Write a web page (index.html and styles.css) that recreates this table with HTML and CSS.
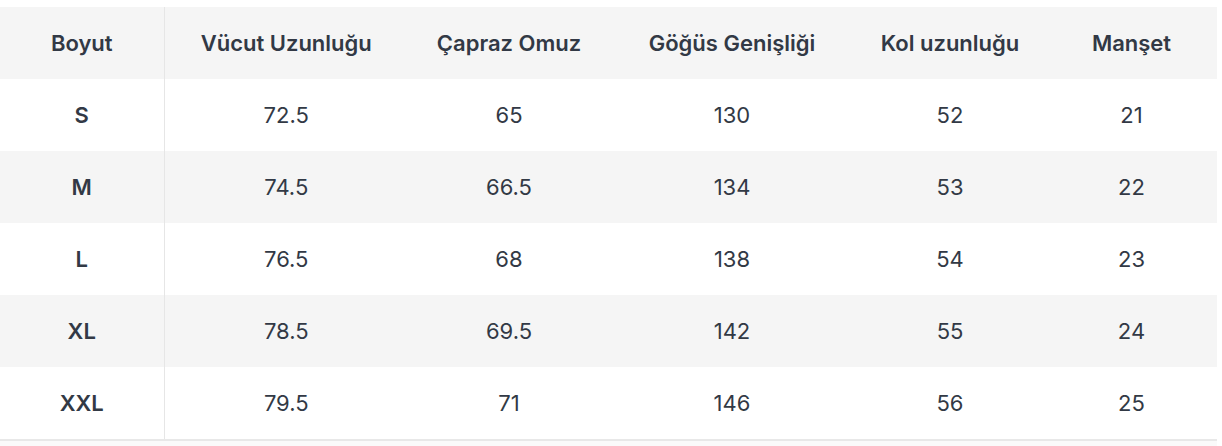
FILE: index.html
```html
<!DOCTYPE html>
<html lang="tr">
<head>
<meta charset="utf-8">
<link rel="stylesheet" href="styles.css">
</head>
<body>
<div class="wrap">
<table class="size-table">
  <colgroup>
    <col class="c1"><col class="c2"><col class="c3"><col class="c4"><col class="c5"><col class="c6">
  </colgroup>
  <thead>
    <tr><th>Boyut</th><th>Vücut Uzunluğu</th><th>Çapraz Omuz</th><th>Göğüs Genişliği</th><th>Kol uzunluğu</th><th>Manşet</th></tr>
  </thead>
  <tbody>
    <tr><td class="size">S</td><td>72.5</td><td>65</td><td>130</td><td>52</td><td>21</td></tr>
    <tr class="alt"><td class="size">M</td><td>74.5</td><td>66.5</td><td>134</td><td>53</td><td>22</td></tr>
    <tr><td class="size">L</td><td>76.5</td><td>68</td><td>138</td><td>54</td><td>23</td></tr>
    <tr class="alt"><td class="size">XL</td><td>78.5</td><td>69.5</td><td>142</td><td>55</td><td>24</td></tr>
    <tr><td class="size">XXL</td><td>79.5</td><td>71</td><td>146</td><td>56</td><td>25</td></tr>
    <tr class="last"><td></td><td></td><td></td><td></td><td></td><td></td></tr>
  </tbody>
</table>
</div>
</body>
</html>
```
FILE: styles.css
```css
html, body {
  margin: 0;
  padding: 0;
  background: #ffffff;
}
body {
  font-family: Inter, "Noto Sans", sans-serif;
  color: #323945;
  overflow: hidden;
}
.wrap {
  padding-top: 7px;
  width: 1217px;
}
.size-table {
  width: 1217px;
  border-collapse: collapse;
  table-layout: fixed;
}
.c1 { width: 164px; }
.c2 { width: 244px; }
.c3 { width: 202px; }
.c4 { width: 244px; }
.c5 { width: 192px; }
.c6 { width: 171px; }
th, td {
  height: 72px;
  padding: 0;
  text-align: center;
  vertical-align: middle;
  font-size: 22px;
  line-height: 26px;
}
th {
  font-weight: 600;
  background: #f5f5f5;
}
td {
  font-weight: 400;
}
th:first-child, td:first-child {
  border-right: 1px solid #e6e6e6;
}
td.size {
  font-weight: 600;
}
tr.alt td {
  background: #f5f5f5;
}
tr.last td {
  height: 5px;
  border-top: 2px solid #e8e8e8;
  background: #fafafa;
}
tr.last td:first-child {
  border-right-color: #fafafa;
}
```
